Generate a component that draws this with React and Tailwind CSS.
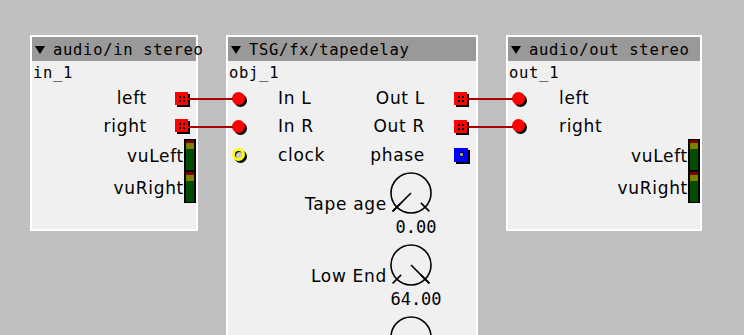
import React from 'react'

// Axoloti-style patch canvas: three objects wired together

function Triangle() {
  return (
    <svg width="10" height="8" viewBox="0 0 10 8" className="shrink-0">
      <polygon points="0,0 10,0 5,8" fill="#000" />
    </svg>
  )
}

function Header({ title }) {
  return (
    <div className="h-[24px] bg-[#999999] flex items-center pl-[3px] pt-[1px]">
      <Triangle />
      <span className="ml-[8px] leading-[20px] whitespace-nowrap text-[15.5px] font-['DejaVu_Sans_Mono',monospace]">{title}</span>
    </div>
  )
}

function Name({ children }) {
  return (
    <div className="h-[23px] pt-[2px] pl-[1px] leading-[20px] text-[15.5px] font-['DejaVu_Sans_Mono',monospace]">{children}</div>
  )
}

function Inlet() {
  return <div className="w-[13px] h-[13px] shrink-0 rounded-full bg-[#ff0000] shadow-[2px_2px_0_#000]" />
}

function ClockInlet() {
  return (
    <div className="w-[13px] h-[13px] shrink-0 rounded-full bg-[#ffff00] p-[3px] shadow-[2px_2px_0_#000]">
      <div className="w-full h-full rounded-full bg-[#c8c8c8] shadow-[inset_1px_1px_0_#000]" />
    </div>
  )
}

function Outlet() {
  return (
    <div className="w-[13px] h-[13px] shrink-0 bg-[#ff0000] shadow-[2px_2px_0_#000] grid grid-cols-[2px_2px] grid-rows-[2px_2px] gap-[2px] content-center justify-center pl-[1px] pt-[1px]">
      <span className="bg-black" />
      <span className="bg-black" />
      <span className="bg-black" />
      <span className="bg-black" />
    </div>
  )
}

function PhaseOutlet() {
  return (
    <div className="w-[14px] h-[14px] shrink-0 bg-[#0000ff] shadow-[2px_2px_0_#000] flex items-center justify-center">
      <div className="w-[5px] h-[5px] bg-[#999999] border border-[#000033]" />
    </div>
  )
}

function Meter() {
  return (
    <div className="w-[12px] h-[32px] shrink-0 border-x-2 border-y border-black bg-[#004c00] flex flex-col">
      <div className="h-[3px] bg-[#7a0000]" />
      <div className="h-[6px] bg-[#808000]" />
    </div>
  )
}

function OutRow({ label, h = 'h-[28px]' }) {
  return (
    <div className={`flex items-center justify-end pr-[8px] ${h}`}>
      <span className="mr-[28px] leading-[20px]">{label}</span>
      <Outlet />
    </div>
  )
}

function InRow({ label, h = 'h-[28px]' }) {
  return (
    <div className={`flex items-center pl-[4px] ${h}`}>
      <Inlet />
      <span className="ml-[34px] leading-[20px]">{label}</span>
    </div>
  )
}

function MeterRow({ label }) {
  return (
    <div className="flex items-center justify-end h-[32px]">
      <span className="leading-[20px] pt-[2px]">{label}</span>
      <Meter />
    </div>
  )
}

function Knob({ v }) {
  const cx = 25, cy = 21
  const th = (-135 + 270 * v) * Math.PI / 180
  const px = (r, a) => cx + r * Math.sin(a)
  const py = (r, a) => cy - r * Math.cos(a)
  const lo = -135 * Math.PI / 180
  const hi = 135 * Math.PI / 180
  return (
    <svg width="52" height="44" viewBox="0 0 52 44" className="shrink-0">
      <circle cx={cx} cy={cy} r="20" fill="none" stroke="#000" strokeWidth="1.6" />
      <line x1={px(14, lo)} y1={py(14, lo)} x2={px(26, lo)} y2={py(26, lo)} stroke="#000" strokeWidth="1.6" />
      <line x1={px(14, hi)} y1={py(14, hi)} x2={px(26, hi)} y2={py(26, hi)} stroke="#000" strokeWidth="1.6" />
      <line x1={cx} y1={cy} x2={px(26, th)} y2={py(26, th)} stroke="#000" strokeWidth="1.6" />
    </svg>
  )
}

function KnobRow({ label, value, v }) {
  return (
    <div className="flex items-start justify-end pr-[32px] h-[72px]">
      <span className="mt-[22px] mr-[-1px] leading-[20px] whitespace-nowrap">{label}</span>
      <div className="w-[58px] flex flex-col">
        <Knob v={v} />
        <div className="mt-[1px] leading-[20px] text-center pl-[2px] tracking-normal font-['DejaVu_Sans_Mono',monospace]">{value}</div>
      </div>
    </div>
  )
}

export default function App() {
  return (
    <div className="relative w-[744px] h-[335px] overflow-hidden bg-[#c0c0c0] text-black text-[17px] tracking-[0.7px] font-['DejaVu_Sans',sans-serif]">
      {/* audio/in stereo */}
      <div className="absolute left-[30px] top-[35px] w-[168px] h-[196px] border-2 border-white bg-[#f0f0f0]">
        <Header title="audio/in stereo" />
        <Name>in_1</Name>
        <OutRow label="left" />
        <OutRow label="right" h="h-[27px]" />
        <MeterRow label="vuLeft" />
        <MeterRow label="vuRight" />
      </div>

      {/* TSG/fx/tapedelay */}
      <div className="absolute left-[226px] top-[35px] w-[252px] h-[420px] border-2 border-white bg-[#f0f0f0]">
        <Header title="TSG/fx/tapedelay" />
        <Name>obj_1</Name>
        <div className="flex items-center h-[28px]">
          <div className="flex-1 flex items-center pl-[4px]">
            <Inlet />
            <span className="ml-[33px] leading-[20px]">In L</span>
          </div>
          <div className="flex items-center pr-[9px]">
            <span className="mr-[29px] leading-[20px]">Out L</span>
            <Outlet />
          </div>
        </div>
        <div className="flex items-center h-[28px]">
          <div className="flex-1 flex items-center pl-[4px]">
            <Inlet />
            <span className="ml-[33px] leading-[20px]">In R</span>
          </div>
          <div className="flex items-center pr-[9px]">
            <span className="mr-[29px] leading-[20px]">Out R</span>
            <Outlet />
          </div>
        </div>
        <div className="flex items-center h-[29px]">
          <div className="flex-1 flex items-center pl-[4px]">
            <ClockInlet />
            <span className="ml-[33px] leading-[20px]">clock</span>
          </div>
          <div className="flex items-center pr-[8px]">
            <span className="mr-[29px] leading-[20px]">phase</span>
            <PhaseOutlet />
          </div>
        </div>
        <div className="pt-[3px]">
          <KnobRow label="Tape age" value="0.00" v={0} />
          <KnobRow label="Low End" value="64.00" v={1} />
          <KnobRow label="" value="" v={0} />
        </div>
      </div>

      {/* audio/out stereo */}
      <div className="absolute left-[506px] top-[35px] w-[196px] h-[196px] border-2 border-white bg-[#f0f0f0]">
        <Header title="audio/out stereo" />
        <Name>out_1</Name>
        <InRow label="left" />
        <InRow label="right" h="h-[27px]" />
        <MeterRow label="vuLeft" />
        <MeterRow label="vuRight" />
      </div>

      {/* wires */}
      <svg className="absolute inset-0 pointer-events-none" width="744" height="335">
        <line x1="188" y1="99" x2="233" y2="99" stroke="#aa0000" strokeWidth="2" />
        <line x1="188" y1="127" x2="233" y2="127" stroke="#aa0000" strokeWidth="2" />
        <line x1="466" y1="99" x2="513" y2="99" stroke="#aa0000" strokeWidth="2" />
        <line x1="466" y1="127" x2="513" y2="127" stroke="#aa0000" strokeWidth="2" />
      </svg>
    </div>
  )
}
